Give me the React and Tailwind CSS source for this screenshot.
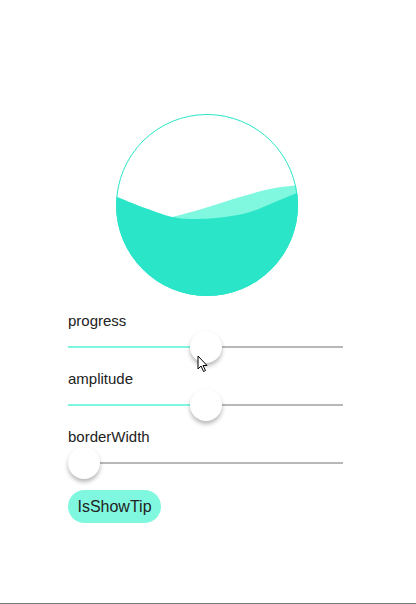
import React from 'react';

// smooth path through points (catmull-rom -> cubic bezier)
function smooth(pts) {
    let d = `M${pts[0][0]},${pts[0][1]}`;
    for (let i = 0; i < pts.length - 1; i++) {
        const p0 = pts[i - 1] || pts[i];
        const p1 = pts[i];
        const p2 = pts[i + 1];
        const p3 = pts[i + 2] || p2;
        const c1 = [p1[0] + (p2[0] - p0[0]) / 6, p1[1] + (p2[1] - p0[1]) / 6];
        const c2 = [p2[0] - (p3[0] - p1[0]) / 6, p2[1] - (p3[1] - p1[1]) / 6];
        d += ` C${c1[0]},${c1[1]} ${c2[0]},${c2[1]} ${p2[0]},${p2[1]}`;
    }
    return d;
}

const darkWave = [[0, 83], [30, 95], [57, 104], [80, 106], [110, 104], [135, 99], [160, 89], [184, 79]];
const lightWave = [[0, 112], [25, 111], [57, 104], [90, 95], [125, 84], [155, 76], [175, 73], [184, 73]];

function WaveBall() {
    return (
        <svg width="184" height="184" viewBox="0 0 184 184" className="block">
            <defs>
                <clipPath id="ball">
                    <circle cx="92" cy="92" r="91" />
                </clipPath>
            </defs>
            <g clipPath="url(#ball)">
                <path d={smooth(lightWave) + ' L184,184 L0,184 Z'} fill="#80f7df" />
                <path d={smooth(darkWave) + ' L184,184 L0,184 Z'} fill="#2ae5c8" />
            </g>
            <circle cx="92" cy="92" r="90.5" fill="none" stroke="#2ae5c8" strokeWidth="1" />
        </svg>
    );
}

function Slider({ label, value }) {
    // thumb centre travels from 16px to (width - 16px)
    const pct = value;
    return (
        <div className="flex flex-col">
            <div className="h-5 leading-5 text-[15px] text-[#222]">{label}</div>
            <div className="relative h-8">
                <div className="absolute left-0 right-0 top-[15px] h-[2px] bg-[#b8b8b8]" />
                <div
                    className="absolute left-0 top-[15px] h-[2px] bg-[#7ff7e0]"
                    style={{ width: `calc(16px + (100% - 32px) * ${pct})` }}
                />
                <div
                    className="absolute top-0 w-8 h-8 rounded-full bg-white shadow-[0_3px_4px_rgba(0,0,0,0.28)]"
                    style={{ left: `calc((100% - 32px) * ${pct})` }}
                />
            </div>
        </div>
    );
}

export default function App() {
    return (
        <div
            className="relative h-[604px] bg-white border-b border-[#7a7a7a] overflow-hidden"
            style={{ fontFamily: '"Liberation Sans", Arial, sans-serif' }}
        >
            <div className="flex flex-col pl-[68px] w-[343px]">
                <div className="mt-[113px] ml-[47px]">
                    <WaveBall />
                </div>
                <div className="mt-[14px] flex flex-col gap-[6px]">
                    <Slider label="progress" value={0.5} />
                    <Slider label="amplitude" value={0.5} />
                    <Slider label="borderWidth" value={0} />
                </div>
                <div className="mt-[11px]">
                    <button
                        type="button"
                        className="h-[33px] w-[93px] rounded-full bg-[#80f7df] text-[16px] text-[#222]"
                    >
                        IsShowTip
                    </button>
                </div>
            </div>

            {/* mouse pointer */}
            <svg className="absolute left-[197px] top-[355px]" width="12" height="18" viewBox="0 0 12 18">
                <path d="M1,1 L1,14 L4,11 L6.5,16.5 L8.5,15.5 L6,10.5 L10,10.5 Z" fill="#fff" stroke="#000" strokeWidth="1" strokeLinejoin="round" />
            </svg>
        </div>
    );
}
